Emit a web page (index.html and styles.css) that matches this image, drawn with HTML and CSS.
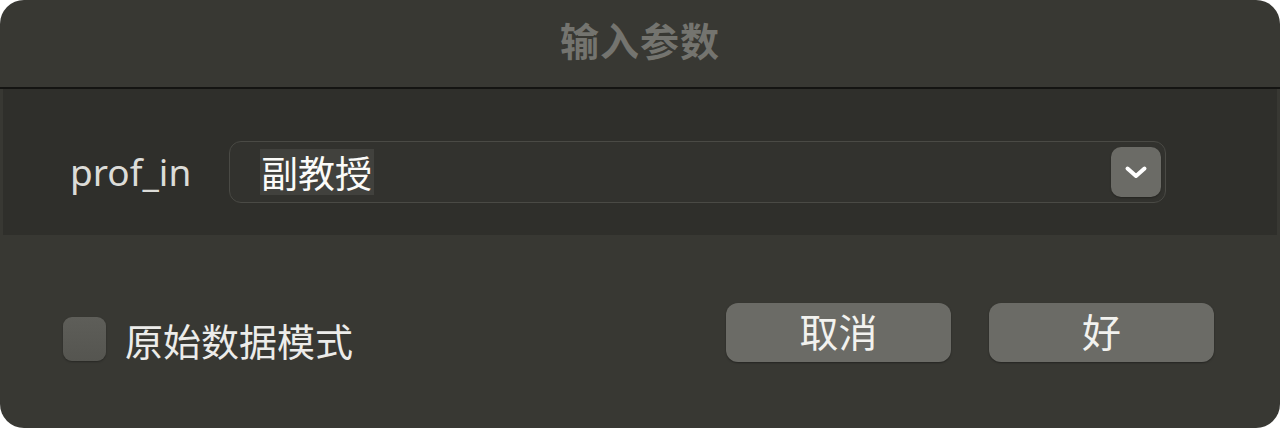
FILE: index.html
```html
<!DOCTYPE html>
<html lang="zh-CN">
<head>
    <meta charset="UTF-8" />
    <title>输入参数</title>
    <link rel="stylesheet" href="styles.css">
</head>
<body>
    <div class="dialog">
        <header class="titlebar">
            <h1>输入参数</h1>
        </header>

        <section class="params">
            <label class="param-name" for="prof_in">prof_in</label>
            <div class="combo" id="prof_in">
                <span class="combo-value"><span class="selected">副教授</span></span>
                <button class="combo-arrow" type="button" aria-label="展开">
                    <svg width="26" height="16" viewBox="0 0 26 16">
                        <path d="M4.5 4.5 L13 12 L21.5 4.5" fill="none" stroke="#fff" stroke-width="4" stroke-linecap="round" stroke-linejoin="round"/>
                    </svg>
                </button>
            </div>
        </section>

        <footer class="actions">
            <label class="raw-mode">
                <span class="checkbox"></span>
                <span>原始数据模式</span>
            </label>
            <div class="buttons">
                <button type="button" class="btn">取消</button>
                <button type="button" class="btn">好</button>
            </div>
        </footer>
    </div>
</body>
</html>
```

FILE: styles.css
```css
* {
    box-sizing: border-box;
}

body {
    margin: 0;
    background: #fff;
    font-family: "Noto Sans", "Noto Sans CJK SC", sans-serif;
    color: #e6e6e3;
}

.dialog {
    width: 1280px;
    height: 428px;
    background: #383833;
    border-radius: 24px;
    overflow: hidden;
    display: flex;
    flex-direction: column;
}

/* barra de titulo */
.titlebar {
    height: 89px;
    border-bottom: 2px solid #141412;
    display: flex;
    justify-content: center;
    padding-top: 13px;
}

.titlebar h1 {
    margin: 0;
    font-family: "Noto Sans CJK SC", sans-serif;
    font-size: 39px;
    font-weight: 700;
    letter-spacing: 1px;
    line-height: 52px;
    color: #74746f;
}

.params {
    margin: 0 3px;
    height: 146px;
    background: #2f2f2b;
    display: flex;
    align-items: flex-start;
    padding: 52px 111px 0 67px;
}

.param-name {
    font-size: 37px;
    line-height: 62px;
    color: #dcdcd8;
    width: 159px;
}

.combo {
    flex: 1;
    height: 62px;
    border: 1.5px solid #4a4a45;
    border-radius: 12px;
    background: #32322e;
    display: flex;
    align-items: center;
    padding: 0 4px 0 30px;
}

.combo-value {
    flex: 1;
    font-family: "Noto Sans CJK SC", sans-serif;
    font-size: 37px;
    line-height: 46px;
    color: #fbfbf9;
}

.selected {
    display: inline-block;
    background: #41413d;
    padding: 0 2px 0 1px;
}

.combo-arrow {
    width: 50px;
    height: 50px;
    border: none;
    border-radius: 10px;
    background: #6b6b66;
    display: flex;
    align-items: center;
    justify-content: center;
    padding: 0;
    box-shadow: 0 1px 2px rgba(0,0,0,0.3);
}

.actions {
    flex: 1;
    display: flex;
    justify-content: space-between;
    padding: 68px 66px 0 63px;
}

.raw-mode {
    display: flex;
    align-items: center;
    gap: 19px;
    height: 44px;
    margin-top: 14px;
    font-family: "Noto Sans CJK SC", sans-serif;
    font-size: 38px;
    color: #ececea;
}

.checkbox {
    width: 43px;
    height: 44px;
    border-radius: 9px;
    background: linear-gradient(#5e5e59, #555550);
    box-shadow: 0 1px 2px rgba(0,0,0,0.3);
}

.buttons {
    display: flex;
    gap: 38px;
}

.btn {
    width: 225px;
    height: 59px;
    border: none;
    border-radius: 12px;
    background: #6b6b66;
    color: #f2f2ef;
    font-family: "Noto Sans CJK SC", sans-serif;
    font-size: 39px;
    line-height: 1;
    padding: 0 0 5px;
    box-shadow: 0 1px 2px rgba(0,0,0,0.35);
}
```
